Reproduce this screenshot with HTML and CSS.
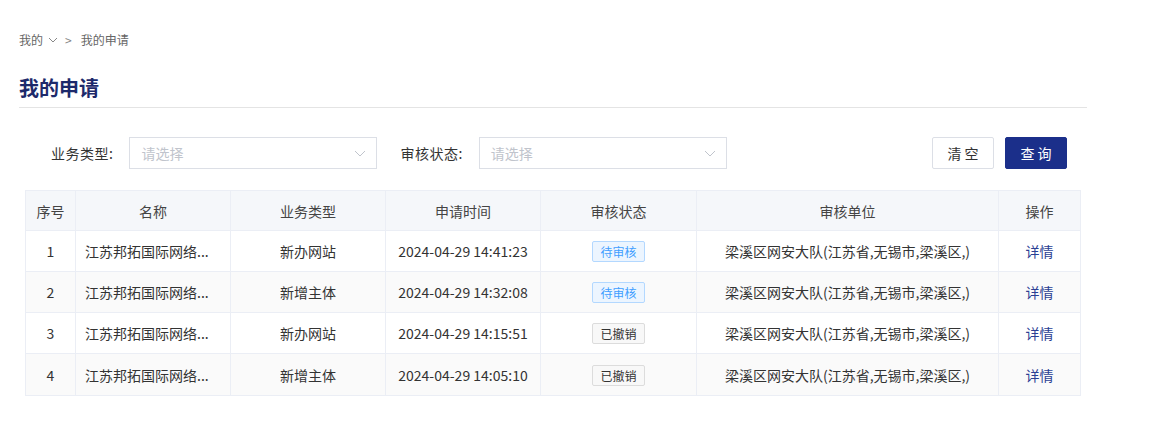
FILE: index.html
```html
<!DOCTYPE html>
<html>
<head>
	<meta charset="utf-8">
	<title>我的申请</title>
	<link rel="stylesheet" href="styles.css">
</head>
<body>

	<div class="page">

		<div class="crumb">
			<span>我的</span>
			<svg class="crumb-arrow" width="10" height="10" viewBox="0 0 10 10"><path d="M1 3 L5 7 L9 3" fill="none" stroke="#888" stroke-width="1"/></svg>
			<span class="crumb-sep">&gt;</span>
			<span>我的申请</span>
		</div>

		<div class="page-title">我的申请</div>

		<div class="filter">
			<div class="filter-item">
				<label>业务类型:</label>
				<div class="select">
					<span>请选择</span>
					<svg width="12" height="12" viewBox="0 0 12 12"><path d="M1 4 L6 9 L11 4" fill="none" stroke="#c0c4cc" stroke-width="1"/></svg>
				</div>
			</div>
			<div class="filter-item">
				<label>审核状态:</label>
				<div class="select">
					<span>请选择</span>
					<svg width="12" height="12" viewBox="0 0 12 12"><path d="M1 4 L6 9 L11 4" fill="none" stroke="#c0c4cc" stroke-width="1"/></svg>
				</div>
			</div>
			<div class="filter-btns">
				<a href="javascript:;" class="btn">清 空</a>
				<a href="javascript:;" class="btn btn-primary">查 询</a>
			</div>
		</div>

		<table class="list">
			<colgroup>
				<col class="c-no">
				<col class="c-name">
				<col class="c-mid">
				<col class="c-mid">
				<col class="c-state">
				<col class="c-unit">
				<col class="c-op">
			</colgroup>
			<thead>
				<tr>
					<th>序号</th>
					<th>名称</th>
					<th>业务类型</th>
					<th>申请时间</th>
					<th>审核状态</th>
					<th>审核单位</th>
					<th>操作</th>
				</tr>
			</thead>
			<tbody>
				<tr>
					<td>1</td>
					<td class="name">江苏邦拓国际网络...</td>
					<td>新办网站</td>
					<td>2024-04-29 14:41:23</td>
					<td><span class="tag tag-wait">待审核</span></td>
					<td>梁溪区网安大队(江苏省,无锡市,梁溪区,)</td>
					<td><a href="javascript:;" class="detail">详情</a></td>
				</tr>
				<tr>
					<td>2</td>
					<td class="name">江苏邦拓国际网络...</td>
					<td>新增主体</td>
					<td>2024-04-29 14:32:08</td>
					<td><span class="tag tag-wait">待审核</span></td>
					<td>梁溪区网安大队(江苏省,无锡市,梁溪区,)</td>
					<td><a href="javascript:;" class="detail">详情</a></td>
				</tr>
				<tr>
					<td>3</td>
					<td class="name">江苏邦拓国际网络...</td>
					<td>新办网站</td>
					<td>2024-04-29 14:15:51</td>
					<td><span class="tag tag-cancel">已撤销</span></td>
					<td>梁溪区网安大队(江苏省,无锡市,梁溪区,)</td>
					<td><a href="javascript:;" class="detail">详情</a></td>
				</tr>
				<tr>
					<td>4</td>
					<td class="name">江苏邦拓国际网络...</td>
					<td>新增主体</td>
					<td>2024-04-29 14:05:10</td>
					<td><span class="tag tag-cancel">已撤销</span></td>
					<td>梁溪区网安大队(江苏省,无锡市,梁溪区,)</td>
					<td><a href="javascript:;" class="detail">详情</a></td>
				</tr>
			</tbody>
		</table>

	</div>

</body>
</html>
```

FILE: styles.css
```css
body {
	margin: 0;
	padding: 0;
	background: #fff;
	font-family: "Microsoft YaHei", "Noto Sans CJK SC", "Liberation Sans", sans-serif;
	font-size: 14px;
	color: #333;
}

a {
	text-decoration: none;
}

.page {
	width: 1068px;
	padding: 31px 0 0 19px;
}

.crumb {
	height: 18px;
	line-height: 18px;
	font-size: 12px;
	color: #666;
	display: flex;
	align-items: center;
}

.crumb-arrow {
	margin: 0 7px 0 5px;
}

.crumb-sep {
	margin-right: 9px;
	color: #888;
}

.page-title {
	margin-top: 26px;
	height: 26px;
	line-height: 26px;
	padding-bottom: 6px;
	font-size: 20px;
	font-weight: bold;
	color: #1d2a6b;
	border-bottom: 1px solid #e4e4e4;
}

.filter {
	display: flex;
	align-items: center;
	margin-top: 29px;
	padding: 0 20px 0 32px;
}

.filter-item {
	display: flex;
	align-items: center;
	margin-right: 23px;
}

.filter-item label {
	color: #333;
	margin-right: 16px;
	letter-spacing: 0.5px;
}

.select {
	height: 30px;
	width: 225px;
	border: 1px solid #dcdfe6;
	display: flex;
	align-items: center;
	justify-content: space-between;
	padding: 0 10px 0 11px;
	color: #c0c4cc;
}

.filter-btns {
	margin-left: auto;
	display: flex;
	gap: 11px;
}

.btn {
	width: 60px;
	height: 30px;
	line-height: 30px;
	text-align: center;
	border: 1px solid #dcdfe6;
	color: #333;
	background: #fff;
	border-radius: 2px;
	font-size: 14px;
}

.btn-primary {
	background: #1b2f8a;
	border-color: #1b2f8a;
	color: #fff;
}

.list {
	margin: 21px 0 0 6px;
	width: 1055px;
	border-collapse: collapse;
	table-layout: fixed;
	border: 1px solid #ebeef5;
}

.c-no { width: 50px; }
.c-name { width: 155px; }
.c-mid { width: 155px; }
.c-state { width: 156px; }
.c-unit { width: 302px; }
.c-op { width: 82px; }

.list th,
.list td {
	border: 1px solid #ebeef5;
	padding: 0;
	line-height: 20px;
	text-align: center;
	vertical-align: middle;
	font-weight: normal;
	color: #333;
	white-space: nowrap;
	overflow: hidden;
}

.list th {
	height: 39px;
	background: #f5f7fa;
	color: #444;
}

.list td {
	height: 40px;
}

.list tbody tr:last-child td {
	height: 41px;
}

.list tbody tr:nth-child(even) td {
	background: #fafafa;
}

.list td.name {
	text-align: left;
	padding-left: 9px;
}

.tag {
	display: inline-block;
	vertical-align: middle;
	height: 19px;
	line-height: 19px;
	padding: 0 7px;
	font-size: 12px;
	border-radius: 2px;
}

.tag-wait {
	background: #ecf5ff;
	border: 1px solid #b3d8ff;
	color: #409eff;
}

.tag-cancel {
	background: #f8f8f8;
	border: 1px solid #dcdcdc;
	color: #333;
}

.detail {
	color: #2b3f94;
}
```
